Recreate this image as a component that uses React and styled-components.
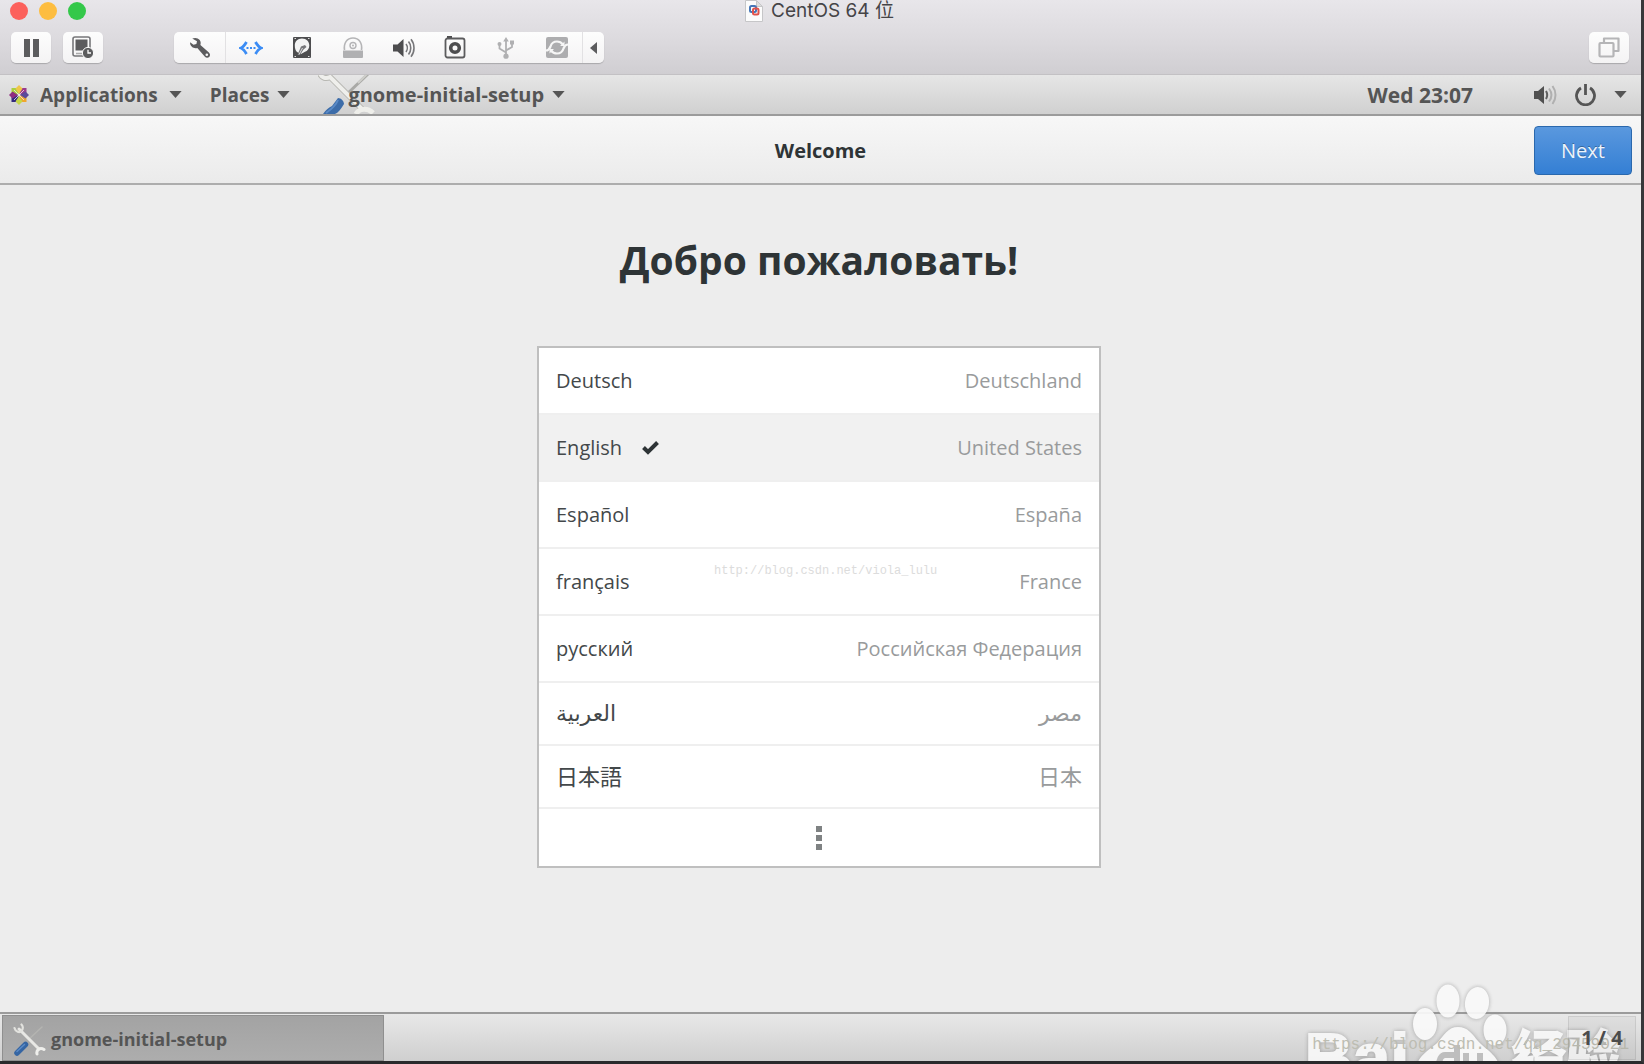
import React, { useState } from 'react';
import styled, { createGlobalStyle } from 'styled-components';

const GlobalStyle = createGlobalStyle`
  * {
    box-sizing: border-box;
  }

  body {
    margin: 0;
  }

  button {
    padding: 0;
    border: none;
    background: none;
    color: inherit;
    font: inherit;
    cursor: pointer;
  }

  svg {
    display: block;
    flex: none;
  }
`;

const Screen = styled.div`
  position: relative;
  display: flex;
  flex-direction: column;
  min-height: 100vh;
  overflow: hidden;
  border-right: 3px solid #37373a;
  border-bottom: 3px solid #2a2a2c;
  background: #ededed;
  color: #2e3436;
  font-family: 'Open Sans', 'Noto Sans', 'Noto Sans CJK JP', 'DejaVu Sans', sans-serif;
  font-size: 20px;
`;

/* ---- host window ---- */

const HostWindow = styled.header`
  height: 75px;
  border-bottom: 1px solid #c3c1c4;
  background: linear-gradient(#e8e6ea, #dddbdf 50%, #d0ced2);
`;

const TitleRow = styled.div`
  display: grid;
  grid-template-columns: 1fr auto 1fr;
  align-items: center;
  height: 22px;
  padding: 0 12px 0 10px;
`;

const Lights = styled.div`
  display: flex;
  gap: 11px;
`;

const Light = styled.button`
  width: 18px;
  height: 18px;
  border-radius: 50%;
  background: ${props => props.$color};
`;

const WindowTitle = styled.div`
  display: flex;
  align-items: center;
  gap: 8px;
  color: #454447;
  font-family: Inter, 'Noto Sans CJK SC', sans-serif;
  font-size: 19px;
  line-height: 22px;
`;

const ToolRow = styled.div`
  display: flex;
  align-items: center;
  gap: 12px;
  padding: 10px 12px 0 11px;
`;

const ToolGroup = styled.div`
  display: flex;
  margin-left: ${props => (props.$push ? 'auto' : props.$gap || 0)};
  border-radius: 5px;
  background: linear-gradient(#fdfdfd, #f4f3f4);
  box-shadow: 0 1px 1px rgba(0, 0, 0, 0.2);
`;

const ToolButton = styled.button`
  display: flex;
  align-items: center;
  justify-content: center;
  width: ${props => props.$width || '40px'};
  height: 31px;
  color: ${props => props.$color || '#5c5c5e'};

  ${props => (props.$line ? 'border-left: 1px solid #e2e1e3;' : null)}
`;

/* ---- desktop top bar ---- */

const TopBar = styled.nav`
  display: flex;
  align-items: center;
  height: 41px;
  padding: 0 14px 0 9px;
  border-bottom: 2px solid #9b9b9b;
  background: linear-gradient(#e6e6e6, #d0d0d0);
  color: #555;
  font-weight: 700;
`;

const MenuButton = styled.button`
  display: flex;
  align-items: center;
  gap: ${props => props.$gap || '8px'};
  height: 39px;
  margin-right: 28px;
  font-size: ${props => props.$size || '19px'};
`;

const Clock = styled.button`
  margin-left: auto;
  margin-right: 61px;
  font-size: 21px;
`;

const StatusButton = styled.button`
  display: flex;
  align-items: center;
  gap: 18px;
`;

const ToolsOverlap = styled.span`
  margin-right: -36px;
`;

/* ---- setup window ---- */

const HeaderBar = styled.div`
  display: grid;
  grid-template-columns: 1fr auto 1fr;
  align-items: center;
  height: 69px;
  padding: 1px 9px 0;
  border-bottom: 2px solid #adadad;
  background: linear-gradient(#f7f7f7, #ebebeb);
`;

const HeaderTitle = styled.h1`
  grid-column: 2;
  margin: 0;
  font-size: 20px;
`;

const NextButton = styled.button`
  justify-self: end;
  width: 98px;
  height: 49px;
  border: 1px solid #2a68ad;
  border-radius: 4px;
  background: linear-gradient(#5a98de, #347fd4);
  color: #eef4fb;
  text-shadow: 0 -1px 0 rgba(0, 0, 0, 0.3);
`;

const Content = styled.main`
  display: flex;
  flex: 1;
  flex-direction: column;
  align-items: center;
  padding: 44px 3px 0 0;
`;

const Greeting = styled.h2`
  margin: 0 0 55px;
  font-size: 39px;
  line-height: 62px;
`;

const LanguageBox = styled.div`
  position: relative;
  width: 564px;
  max-width: 100%;
  border: 2px solid #bfbfbf;
  background: #fff;
`;

const LanguageList = styled.ul`
  margin: 0;
  padding: 0;
  list-style: none;
`;

const LanguageItem = styled.li`
  border-bottom: 2px solid #efefef;

  &:last-child {
    border-bottom: none;
  }
`;

const LanguageRow = styled.button`
  display: flex;
  align-items: center;
  width: 100%;
  height: ${props => (props.$short ? '61px' : '65px')};
  padding: ${props => (props.$short ? '0 17px 4px' : '0 17px')};
  background: ${props => (props.$selected ? '#f1f1f1' : '#fff')};
  color: #43484a;
  font-size: ${props => (props.$short ? '22px' : '20px')};
`;

const Check = styled.span`
  margin-left: 20px;
`;

const Country = styled.span`
  margin-left: auto;
  color: #999b9c;
`;

const MoreButton = styled.button`
  display: flex;
  align-items: center;
  justify-content: center;
  width: 100%;
  height: 57px;
`;

const ListMark = styled.span`
  position: absolute;
  top: 216px;
  left: 175px;
  color: #dcdcdc;
  font-family: 'Liberation Mono', monospace;
  font-size: 12px;
  pointer-events: none;
`;

/* ---- window list ---- */

const BottomBar = styled.footer`
  display: flex;
  align-items: center;
  justify-content: space-between;
  height: 49px;
  padding: 0 5px 0 2px;
  border-top: 2px solid #9b9b9b;
  background: linear-gradient(#e8e8e8, #cfcfcf);
`;

const TaskButton = styled.button`
  display: flex;
  align-items: center;
  gap: 5px;
  width: 382px;
  height: 46px;
  padding: 3px 0 0 10px;
  border: 1px solid #8f8f8f;
  background: linear-gradient(#a3a3a3, #adadad);
  color: #555;
  font-size: 18px;
  font-weight: 700;
`;

const Pager = styled.button`
  position: relative;
  z-index: 1;
  width: 68px;
  height: 44px;
  border: 1px solid rgba(0, 0, 0, 0.08);
  background: rgba(0, 0, 0, 0.03);
  color: #4b4b4b;
  font-size: 20px;
  font-weight: 700;
`;

const Brand = styled.div`
  position: absolute;
  right: 21px;
  bottom: -34px;
  display: flex;
  align-items: flex-end;
  color: #f8f8f8;
  font-family: 'Liberation Sans', 'Noto Sans CJK SC', sans-serif;
  font-size: 67px;
  font-weight: 700;
  line-height: 76px;
  opacity: 0.92;
  filter: drop-shadow(0 0 2px rgba(120, 120, 120, 0.6));
  -webkit-text-stroke: 2px #f8f8f8;
  pointer-events: none;
`;

const BrandSuffix = styled.span`
  margin-left: 5px;
  font-size: 54px;
`;

const PageMark = styled.span`
  position: absolute;
  right: 12px;
  bottom: 4px;
  color: #bdbdb2;
  font-family: 'Liberation Mono', monospace;
  font-size: 16px;
  line-height: 24px;
  pointer-events: none;
`;

/* ---- icons ---- */

function PauseIcon() {
  return (
    <svg width="15" height="18" viewBox="0 0 15 18" fill="currentColor">
      <path d="M0 0h6v18H0zM9 0h6v18H9z" />
    </svg>
  );
}

function SnapshotIcon() {
  return (
    <svg width="22" height="23" viewBox="0 0 22 23" fill="none">
      <rect x="1" y="1" width="17" height="19" rx="2" stroke="#77777a" strokeWidth="1.6" />
      <rect x="3.5" y="3.5" width="12" height="11" fill="#5c5c5e" />
      <path d="M4 17.5h6" stroke="#aaa" strokeWidth="1.5" />
      <circle cx="16" cy="17" r="5.6" fill="#5c5c5e" stroke="#fafafa" />
      <path d="M16 13.8V17h3" stroke="#fff" strokeWidth="1.3" />
    </svg>
  );
}

function WrenchIcon() {
  return (
    <svg width="22" height="22" viewBox="0 0 22 22" fill="currentColor">
      <path d="M3.2 1.6C5.800.4 9 .8 10.700 3c1.100 1.500 1.200 3.200.7 4.900l8.500 7.600c1.500 1.400 1.400 3.400.3 4.500-1.200 1.200-3.200 1.100-4.500-.4L8.300 11c-1.900.5-3.900.2-5.400-1.200C1.500 8.600.9 7 1.100 5.300l3.400 2.400 2.900-.8.6-2.700z" />
      <circle cx="17.800" cy="17.800" r="1.300" fill="#f8f8f8" />
    </svg>
  );
}

function NetworkIcon() {
  return (
    <svg width="24" height="14" viewBox="0 0 24 14" fill="none" stroke="currentColor" strokeWidth="2.800">
      <path d="M7.500 1C5.500 4.500 4.500 6 2 7c2.500 1 3.500 2.500 5.500 6M16.500 1c2 3.500 3 5 5.500 6-2.500 1-3.500 2.500-5.500 6" />
      <path d="M7.500 7h2M11 7h2M14.500 7h2" strokeWidth="2" />
    </svg>
  );
}

function DiskIcon() {
  return (
    <svg width="18" height="21" viewBox="0 0 18 21">
      <rect width="18" height="21" rx="1" fill="#4d4d4f" />
      <path d="M9 1.500c4.500 0 7.300 3 7.300 7 0 3.200-1.800 5.400-4.300 6.300L8 17l-4-2C2.500 13.500 1.800 11.500 1.800 8.500c0-4 2.700-7 7.200-7z" fill="#f4f4f4" />
      <path d="M4.500 18 8 9.500l4-1.500 1.500 2-3 2.500L7 18z" fill="#77777a" />
      <path d="M6 17.500 9.500 11" stroke="#ddd" />
      <path d="M1.500 1.500h1.500M15 1.500h1.500M1.500 19.500h1.500M15 19.500h1.500" stroke="#ddd" />
    </svg>
  );
}

function OpticalIcon() {
  return (
    <svg width="22" height="21" viewBox="0 0 22 21" fill="none">
      <path d="M2.500 13C1.500 6 5 1 11 1s9.500 5 8.500 12" stroke="#b5b5b7" strokeWidth="1.600" />
      <circle cx="11" cy="8.500" r="3" stroke="#b5b5b7" strokeWidth="1.400" />
      <circle cx="11" cy="8.500" r="1" fill="#b5b5b7" />
      <path d="M1 13.500h20V20a1 1 0 0 1-1 1H2a1 1 0 0 1-1-1z" fill="#b0b0b2" />
    </svg>
  );
}

function SoundIcon() {
  return (
    <svg width="22" height="20" viewBox="0 0 22 20" fill="none" stroke="#77777a" strokeWidth="1.600">
      <path d="M0 6.500h4.500L10.500 1v18l-6-5.500H0z" fill="#4d4d4f" stroke="none" />
      <path d="M13 6c1.700 2.200 1.700 5.800 0 8M15.500 3.500c3 3.500 3 9.500 0 13M18 1.200c4 5 4 12.600 0 17.600" />
    </svg>
  );
}

function CameraIcon() {
  return (
    <svg width="22" height="23" viewBox="0 0 22 23" fill="none">
      <path d="M3 0h5v2.500H3z" fill="#4d4d4f" />
      <rect x="1.500" y="2.500" width="19" height="19" rx="2" stroke="#5c5c5e" strokeWidth="1.800" />
      <circle cx="11" cy="12" r="4.300" stroke="#4d4d4f" strokeWidth="3.600" />
    </svg>
  );
}

function UsbIcon() {
  return (
    <svg width="18" height="22" viewBox="0 0 18 22" fill="none" stroke="#b0b0b2" strokeWidth="1.800">
      <path d="M9 19V3M9 15.500 2.500 11.500V7.500M9 13.500l6-3.500V5.500" />
      <path d="M9 0l2.800 4.500H6.200zM13 3.500h4v4h-4z" fill="#b0b0b2" stroke="none" />
      <circle cx="2.500" cy="7" r="2" fill="#b0b0b2" stroke="none" />
      <circle cx="9" cy="19.200" r="2.600" fill="#b0b0b2" stroke="none" />
    </svg>
  );
}

function SyncIcon() {
  return (
    <svg width="22" height="21" viewBox="0 0 22 21" fill="none">
      <rect width="22" height="21" rx="2" fill="#adadaf" />
      <path d="M0 13.500c3 0 3.500-1.500 4.500-4C5.500 6 8 4.500 11 4.500c2.500 0 4.500 1 6 3M22 7.500c-3 0-3.500 1.500-4.500 4-1 3.500-3.500 5-6.500 5-2.500 0-4.500-1-6-3" stroke="#f6f6f6" strokeWidth="2.200" />
      <path d="M18.500 4.500v4.500h-4.500zM3.500 16.500v-4.500h4.500z" fill="#f6f6f6" />
    </svg>
  );
}

function WindowsIcon() {
  return (
    <svg width="22" height="21" viewBox="0 0 22 21" fill="none" stroke="#b5b5b7" strokeWidth="2.200" strokeLinejoin="round">
      <rect x="1.500" y="6" width="14" height="13.500" rx="1" />
      <path d="M6 5.500v-4h14.500V14H16" />
    </svg>
  );
}

function DocumentIcon() {
  return (
    <svg width="18" height="22" viewBox="0 0 18 22" fill="none">
      <path d="M.5.500h11l6 6v15H.5z" fill="#fcfcfc" stroke="#c6c6c8" />
      <path d="M11.500.500v6h6z" fill="#ddd" stroke="#c6c6c8" />
      <rect x="5" y="6" width="6" height="6" rx="1.500" stroke="#4576b8" strokeWidth="2" />
      <rect x="8" y="8.500" width="5.500" height="6" rx="1.500" stroke="#e0524c" strokeWidth="2" />
    </svg>
  );
}

function CentosIcon() {
  return (
    <svg width="20" height="20" viewBox="0 0 20 20">
      <path d="M9.500 9.500H2.500V3h7z" fill="#a9cf3f" />
      <path d="M10.500 9.500V3h7v6.500z" fill="#9a3a8d" />
      <path d="M9.500 10.500v6.500h-7v-6.500z" fill="#33297e" />
      <path d="M10.500 10.500h7V17h-7z" fill="#f0a62c" />
      <path d="M10 0l3.500 3.500L10 9 6.500 3.500z" fill="#efc64a" />
      <path d="M20 10l-3.500 3.500L11 10l5.500-3.500z" fill="#5b4a9b" />
      <path d="M10 20l-3.500-3.500L10 11l3.500 5.500z" fill="#c5d64a" />
      <path d="M0 10l3.500-3.500L9 10l-5.500 3.500z" fill="#8f2c80" />
      <path d="M5 5l10 10M15 5 5 15" stroke="#f3e7f0" strokeWidth=".8" />
    </svg>
  );
}

function LargeToolsIcon() {
  return (
    <svg width="58" height="39" viewBox="0 0 58 39" fill="none">
      <path d="M50-1 28 20" stroke="#a9a9a6" strokeWidth="3" />
      <path d="M49-1 40 8" stroke="#cfcfcb" strokeWidth="2" />
      <path d="M2-1c2 4 6 5 10 3L44 34" stroke="#b8b8b3" strokeWidth="6" />
      <path d="M2-1c2 4 6 5 10 3L44 34" stroke="#efefec" strokeWidth="4" />
      <path d="M38 39c3-6 12-6 17-1" stroke="#eeeeea" strokeWidth="5" />
      <path d="M20 23c3 0 6 3 6 6-3 5-6 9-9 10H5c3-4 5-6 9-8z" fill="#3c6ca9" />
      <path d="M20 25c-2 5-6 9-12 13" stroke="#5a8ac6" strokeWidth="2" />
    </svg>
  );
}

function SmallToolsIcon() {
  return (
    <svg width="33" height="33" viewBox="0 0 33 33" fill="none" strokeLinecap="round">
      <path d="M29 4 16 16" stroke="#b4b4b1" strokeWidth="1.500" />
      <path d="M6 6 26 26" stroke="#e8e8e5" strokeWidth="3" />
      <path d="M1.500 5c1 4 5 5 7 3s1.500-5 0-6.500" stroke="#e2e2de" strokeWidth="2.200" />
      <path d="M24 31c-1-4 3-7 7-4.500" stroke="#efefec" strokeWidth="3" />
      <path d="M12.500 21.500 4 30" stroke="#3565a3" strokeWidth="5.500" />
      <path d="M11.500 21.500 4 28.500" stroke="#5a8ac6" strokeWidth="1.500" />
    </svg>
  );
}

function DownArrow() {
  return (
    <svg width="13" height="7" viewBox="0 0 14 8" fill="currentColor">
      <path d="M0 0h14L7 8z" />
    </svg>
  );
}

function VolumeIcon() {
  return (
    <svg width="23" height="20" viewBox="0 0 23 20" fill="none" strokeWidth="2">
      <path d="M0 6h4l6-5v18l-6-5H0z" fill="#505050" />
      <path d="M12 6c1.500 2.500 1.500 5.500 0 8" stroke="#606060" />
      <path d="M15 3.500c3 4 3 9 0 13M18.500 1c4 5.500 4 12.500 0 18" stroke="#b0b0b0" />
    </svg>
  );
}

function PowerIcon() {
  return (
    <svg width="21" height="22" viewBox="0 0 21 22" fill="none" stroke="currentColor" strokeWidth="2.800">
      <path d="M6 4A9 9 0 1 0 15 4M10.500 0v11" />
    </svg>
  );
}

function CheckIcon() {
  return (
    <svg width="17" height="14" viewBox="0 0 17 14" fill="none" stroke="#2e3436" strokeWidth="4">
      <path d="M1.500 6.500 6 11l9.500-9.500" />
    </svg>
  );
}

function MoreIcon() {
  return (
    <svg width="6" height="24" viewBox="0 0 6 24" fill="#7f8283">
      <path d="M0 0h6v6H0zM0 9h6v6H0zM0 18h6v6H0z" />
    </svg>
  );
}

function PawIcon() {
  return (
    <svg width="98" height="112" viewBox="0 0 98 112" fill="#fafafa">
      <ellipse cx="16" cy="41" rx="12" ry="16" />
      <ellipse cx="39" cy="18" rx="11.500" ry="16.500" />
      <ellipse cx="68" cy="20" rx="12" ry="16" transform="rotate(8 68 20)" />
      <ellipse cx="86" cy="47" rx="11.500" ry="15.500" />
      <path d="M49 44c-10 0-14 8-20 15C21 67 7 73 7 88c0 13 10 20 22 20h40c12 0 22-7 22-20 0-15-14-21-22-30-6-7-10-14-20-14z" />
      <path d="M48 62v30H36c-8 0-8-20 0-20h12M57 70v16c0 4 2 5 5 5h9V70" fill="none" stroke="#bdbdbd" strokeWidth="6" />
    </svg>
  );
}

const languages = [
  { name: 'Deutsch', country: 'Deutschland' },
  { name: 'English', country: 'United States' },
  { name: 'Español', country: 'España' },
  { name: 'français', country: 'France' },
  { name: 'русский', country: 'Российская Федерация' },
  { name: 'العربية', country: 'مصر', short: true },
  { name: '日本語', country: '日本', short: true },
];

const devices = [
  { label: 'Settings', icon: <WrenchIcon /> },
  { label: 'Network', icon: <NetworkIcon />, color: '#3b8cf5', line: true },
  { label: 'Hard disk', icon: <DiskIcon /> },
  { label: 'CD/DVD', icon: <OpticalIcon /> },
  { label: 'Sound', icon: <SoundIcon /> },
  { label: 'Camera', icon: <CameraIcon /> },
  { label: 'USB', icon: <UsbIcon /> },
  { label: 'Shared folders', icon: <SyncIcon /> },
];

function App() {
  const [selected, setSelected] = useState('English');

  return (
    <Screen>
      <GlobalStyle />
      <HostWindow>
        <TitleRow>
          <Lights>
            <Light $color="#fc615c" aria-label="Close" />
            <Light $color="#fdbd40" aria-label="Minimize" />
            <Light $color="#34c84a" aria-label="Zoom" />
          </Lights>
          <WindowTitle>
            <DocumentIcon />
            CentOS 64 位
          </WindowTitle>
        </TitleRow>
        <ToolRow>
          <ToolGroup>
            <ToolButton aria-label="Pause"><PauseIcon /></ToolButton>
          </ToolGroup>
          <ToolGroup>
            <ToolButton aria-label="Snapshots"><SnapshotIcon /></ToolButton>
          </ToolGroup>
          <ToolGroup $gap="59px">
            {devices.map(device => (
              <ToolButton
                key={device.label}
                aria-label={device.label}
                $width="51px"
                $color={device.color}
                $line={device.line}
              >
                {device.icon}
              </ToolButton>
            ))}
            <ToolButton aria-label="Collapse" $width="22px" $line>
              <svg width="7" height="12" viewBox="0 0 7 12" fill="currentColor">
                <path d="M7 0v12L0 6z" />
              </svg>
            </ToolButton>
          </ToolGroup>
          <ToolGroup $push>
            <ToolButton aria-label="Full screen"><WindowsIcon /></ToolButton>
          </ToolGroup>
        </ToolRow>
      </HostWindow>

      <TopBar>
        <MenuButton $gap="11px">
          <CentosIcon />
          <span>Applications</span>
          <DownArrow />
        </MenuButton>
        <MenuButton>
          <span>Places</span>
          <DownArrow />
        </MenuButton>
        <MenuButton $size="20px">
          <ToolsOverlap>
            <LargeToolsIcon />
          </ToolsOverlap>
          <span>gnome-initial-setup</span>
          <DownArrow />
        </MenuButton>
        <Clock>Wed 23:07</Clock>
        <StatusButton aria-label="System">
          <VolumeIcon />
          <PowerIcon />
          <DownArrow />
        </StatusButton>
      </TopBar>

      <HeaderBar>
        <HeaderTitle>Welcome</HeaderTitle>
        <NextButton>Next</NextButton>
      </HeaderBar>

      <Content>
        <Greeting>Добро пожаловать!</Greeting>
        <LanguageBox>
          <LanguageList>
            {languages.map(({ name, country, short }) => (
              <LanguageItem key={name}>
                <LanguageRow
                  $short={short}
                  $selected={name === selected}
                  onClick={() => setSelected(name)}
                >
                  <span>{name}</span>
                  {name === selected && <Check><CheckIcon /></Check>}
                  <Country>{country}</Country>
                </LanguageRow>
              </LanguageItem>
            ))}
            <LanguageItem>
              <MoreButton aria-label="More languages"><MoreIcon /></MoreButton>
            </LanguageItem>
          </LanguageList>
          <ListMark>http://blog.csdn.net/viola_lulu</ListMark>
        </LanguageBox>
      </Content>

      <BottomBar>
        <TaskButton>
          <SmallToolsIcon />
          gnome-initial-setup
        </TaskButton>
        <Pager>1 / 4</Pager>
      </BottomBar>

      <Brand>
        <span>Bai</span>
        <PawIcon />
        <BrandSuffix>经验</BrandSuffix>
      </Brand>
      <PageMark>https://blog.csdn.net/qq_29459021</PageMark>
    </Screen>
  );
}

export default App;
